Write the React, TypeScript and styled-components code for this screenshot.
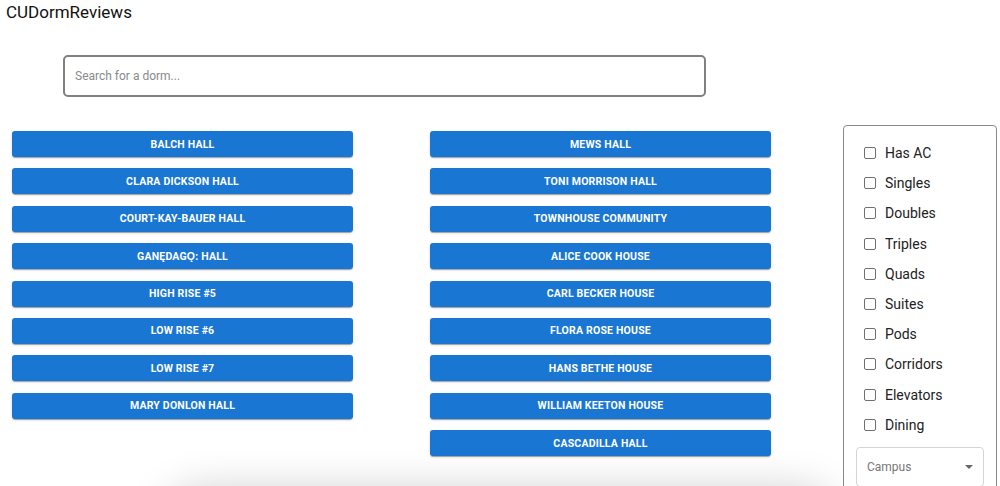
import React from 'react';
import styled, {createGlobalStyle} from 'styled-components';

const GlobalStyle = createGlobalStyle`
  body {
    margin: 0;
    font-family: Roboto, "Liberation Sans", Arial, sans-serif;
    background: #fff;
    overflow: hidden;
  }
`

const leftDorms = [
    'Balch Hall',
    'Clara Dickson Hall',
    'Court-Kay-Bauer Hall',
    'Ganędagǫ: Hall',
    'High Rise #5',
    'Low Rise #6',
    'Low Rise #7',
    'Mary Donlon Hall',
]

const rightDorms = [
    'Mews Hall',
    'Toni Morrison Hall',
    'Townhouse Community',
    'Alice Cook House',
    'Carl Becker House',
    'Flora Rose House',
    'Hans Bethe House',
    'William Keeton House',
    'Cascadilla Hall',
]

const filters = ['Has AC', 'Singles', 'Doubles', 'Triples', 'Quads', 'Suites', 'Pods', 'Corridors', 'Elevators', 'Dining']

export default function App() {
    return (
        <Page>
            <GlobalStyle/>
            <Title>CUDormReviews</Title>
            <SearchBox placeholder="Search for a dorm..."/>
            <MainRow>
                <DormColumn>
                    {leftDorms.map(d => <DormButton key={d}>{d}</DormButton>)}
                </DormColumn>
                <DormColumn>
                    {rightDorms.map(d => <DormButton key={d}>{d}</DormButton>)}
                </DormColumn>
                <FilterPanel>
                    {filters.map(f => (
                        <FilterRow key={f}>
                            <Box/>
                            <span>{f}</span>
                        </FilterRow>
                    ))}
                    <Select>
                        <span>Campus</span>
                        <Arrow/>
                    </Select>
                </FilterPanel>
            </MainRow>
            <ResultsCard/>
        </Page>
    )
}

const Page = styled.div`
  display: flex;
  flex-direction: column;
`

const Title = styled.div`
  font-size: 17px;
  color: #111;
  padding: 2px 6px 0;
  line-height: 20px;
`

const SearchBox = styled.input`
  margin: 33px 0 0 63px;
  width: 643px;
  height: 42px;
  box-sizing: border-box;
  border: 2px solid #808080;
  border-radius: 5px;
  padding: 0 10px;
  font-family: Roboto, "Liberation Sans", Arial, sans-serif;
  font-size: 12px;
  color: #333;
  outline: none;

  &::placeholder {
    color: #8a8a8a;
  }
`

const MainRow = styled.div`
  display: flex;
  align-items: flex-start;
  margin-top: 28px;
  padding-left: 12px;
`

const DormColumn = styled.div`
  width: 341px;
  display: flex;
  flex-direction: column;
  gap: 11.4px;
  margin-top: 6px;
  margin-right: 77px;

  &:nth-child(2) {
    margin-right: 72px;
  }
`

const DormButton = styled.button`
  height: 26px;
  background: #1976d2;
  color: #fff;
  border: none;
  border-radius: 3px;
  font-family: Roboto, "Liberation Sans", Arial, sans-serif;
  font-weight: 700;
  font-size: 10.5px;
  letter-spacing: 0.2px;
  text-transform: uppercase;
  box-shadow: 0 2px 1px -1px rgba(0, 0, 0, 0.2), 0 1px 1px 0 rgba(0, 0, 0, 0.14), 0 1px 3px 0 rgba(0, 0, 0, 0.12);
  cursor: pointer;
`

const FilterPanel = styled.div`
  width: 154px;
  box-sizing: border-box;
  border: 1px solid #8a8a8a;
  border-radius: 4px;
  padding: 12px 12px 10px 12px;
  display: flex;
  flex-direction: column;
`

const FilterRow = styled.label`
  display: flex;
  align-items: center;
  height: 30.2px;
  padding-left: 8px;
  gap: 9px;
  font-size: 14px;
  color: #222;
`

const Box = styled.span`
  width: 10px;
  height: 10px;
  border: 1.5px solid #707070;
  border-radius: 2px;
`

const Select = styled.div`
  margin-top: 7px;
  height: 40px;
  box-sizing: border-box;
  border: 1px solid #d4d4d4;
  border-radius: 4px;
  display: flex;
  align-items: center;
  justify-content: space-between;
  padding: 0 10px 0 10px;
  font-size: 12px;
  color: #777;
`

const Arrow = styled.span`
  width: 0;
  height: 0;
  border-left: 4px solid transparent;
  border-right: 4px solid transparent;
  border-top: 4px solid #666;
`

const ResultsCard = styled.div`
  width: 675px;
  height: 200px;
  margin: 0 auto;
  margin-top: -4px;
  background: #fff;
  border-radius: 40px;
  box-shadow: 0 -6px 40px rgba(0, 0, 0, 0.18);
`
